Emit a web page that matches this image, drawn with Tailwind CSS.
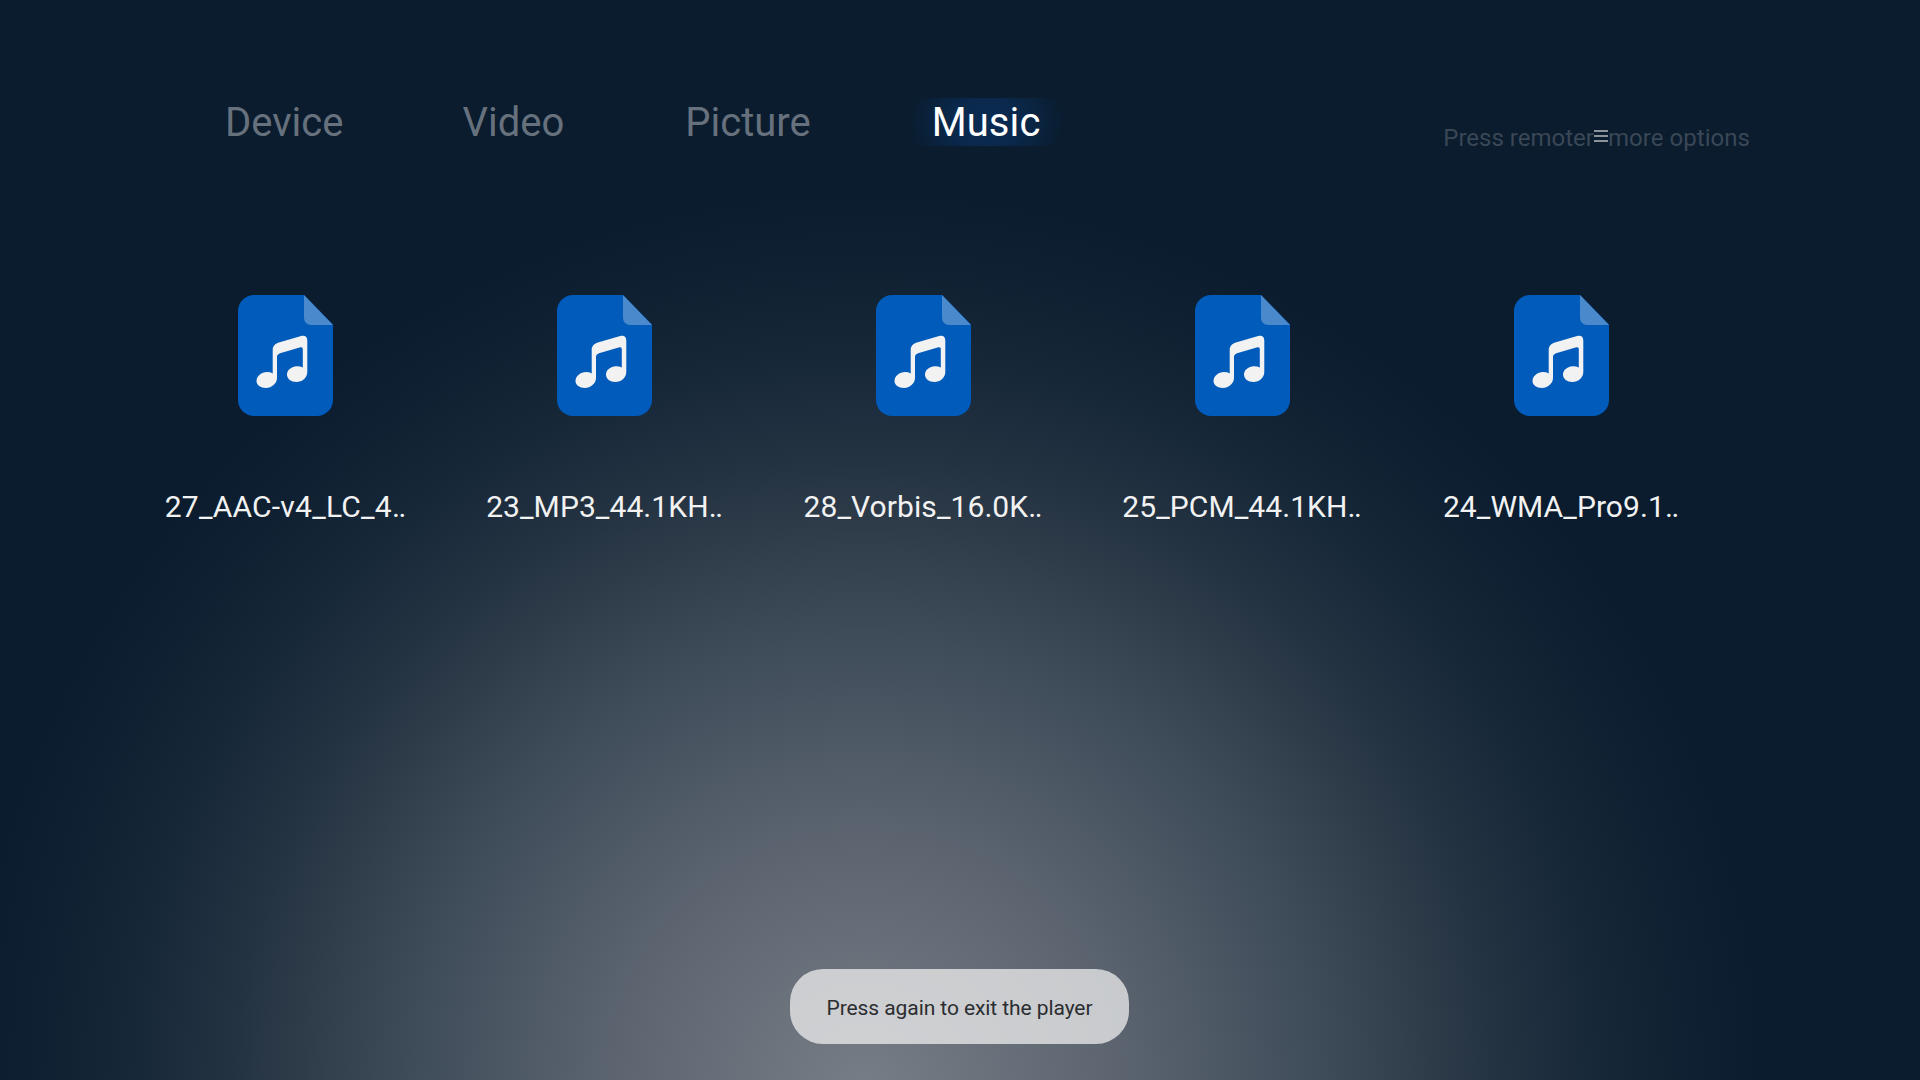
<!DOCTYPE html>
<html lang="en">
<head>
<meta charset="utf-8">
<title>Media player</title>
<script src="https://cdn.jsdelivr.net/npm/@tailwindcss/browser@4"></script>
</head>
<body class="h-[1080px] w-[1920px] overflow-hidden bg-[#0a1c2d] font-['Roboto',sans-serif]">
<svg class="hidden">
  <symbol id="music-file" viewBox="0 0 95 121">
    <path fill="#005bbb" d="M16 0H66L95 29.500V105A16 16 0 0 1 79 121H16A16 16 0 0 1 0 105V16A16 16 0 0 1 16 0Z"/>
    <path fill="#4a89cc" d="M66 0L95 30H73A7 7 0 0 1 66 23Z"/>
    <path fill="#f2f2f2" d="M34.700 55Q34.700 49.500 40 47.700L64 40.800Q69.200 40 69.300 45.500V77C69.300 83 64 87 58.500 87C53 87 49 84 49 79.500C49 74.500 54 71.500 58.500 71.200Q62 71 64.800 72.500V54Q64.800 51.800 62.500 52.300L42 58.200Q39 59.300 39 62V83C39 88.500 33.500 93 28 93C22.500 93 18.500 90 18.500 86C18.500 81 23.500 77 29 77Q32.500 77 34.700 78.400Z"/>
  </symbol>
</svg>
<div class="relative flex h-full w-full flex-col bg-[radial-gradient(circle_900px_at_865px_1090px,#767d86_0%,#5f6772_25%,#505b67_37%,#3f4c59_50%,#323f4d_60%,#243342_70%,#162738_82%,#0e2031_92%,#0a1c2d_100%)]">
  <header class="mt-[98px] flex h-[48px] justify-between pr-[170px] pl-[225px]">
    <nav class="flex gap-[120px] text-[40px] leading-[50px] text-[#67717d]">
      <span>Device</span>
      <span class="-ml-px">Video</span>
      <span class="ml-px">Picture</span>
      <span class="-mr-[23px] -ml-[22px] h-[48px] bg-[radial-gradient(ellipse_80px_60px_at_50%_50%,#0a2c53_0%,#0a284b_45%,#0a2038_80%,#0a1c2d_100%)] px-[23px] tracking-[0.1px] text-white">Music</span>
    </nav>
    <div class="flex items-start pt-[25px] text-[24px] leading-[30px] text-[#3a4756]">
      <span>Press remoter</span>
      <svg class="mt-[7px] h-[12px] w-[14px]" viewBox="0 0 14 12" fill="#8b939b"><path d="M0 0H14V2H0ZM0 5H14V7H0ZM0 10H14V12H0Z"/></svg>
      <span class="tracking-[0.05px]">more options</span>
    </div>
  </header>
  <main class="mt-[149px] ml-[126px] grid grid-cols-[repeat(5,319px)] text-[30px] leading-[36px] tracking-[0.08px] text-[#f2f2f2]">
    <div class="flex flex-col items-center gap-[73px]"><svg class="h-[121px] w-[95px]"><use href="#music-file"/></svg><span class="tracking-[0.22px]">27_AAC-v4_LC_4‥</span></div>
    <div class="flex flex-col items-center gap-[73px]"><svg class="h-[121px] w-[95px]"><use href="#music-file"/></svg><span>23_MP3_44.1KH‥</span></div>
    <div class="flex flex-col items-center gap-[73px]"><svg class="h-[121px] w-[95px]"><use href="#music-file"/></svg><span class="-ml-px">28_Vorbis_16.0K‥</span></div>
    <div class="flex flex-col items-center gap-[73px]"><svg class="h-[121px] w-[95px]"><use href="#music-file"/></svg><span class="-ml-px">25_PCM_44.1KH‥</span></div>
    <div class="flex flex-col items-center gap-[73px]"><svg class="h-[121px] w-[95px]"><use href="#music-file"/></svg><span class="-ml-px">24_WMA_Pro9.1‥</span></div>
  </main>
  <div class="absolute top-[969px] left-[790px] flex h-[75px] w-[339px] items-center justify-center rounded-[33px] bg-[#eeeeee]/75 pt-[4px] text-[21px] tracking-[-0.08px] text-[#2b2d30]">Press again to exit the player</div>
</div>
</body>
</html>
